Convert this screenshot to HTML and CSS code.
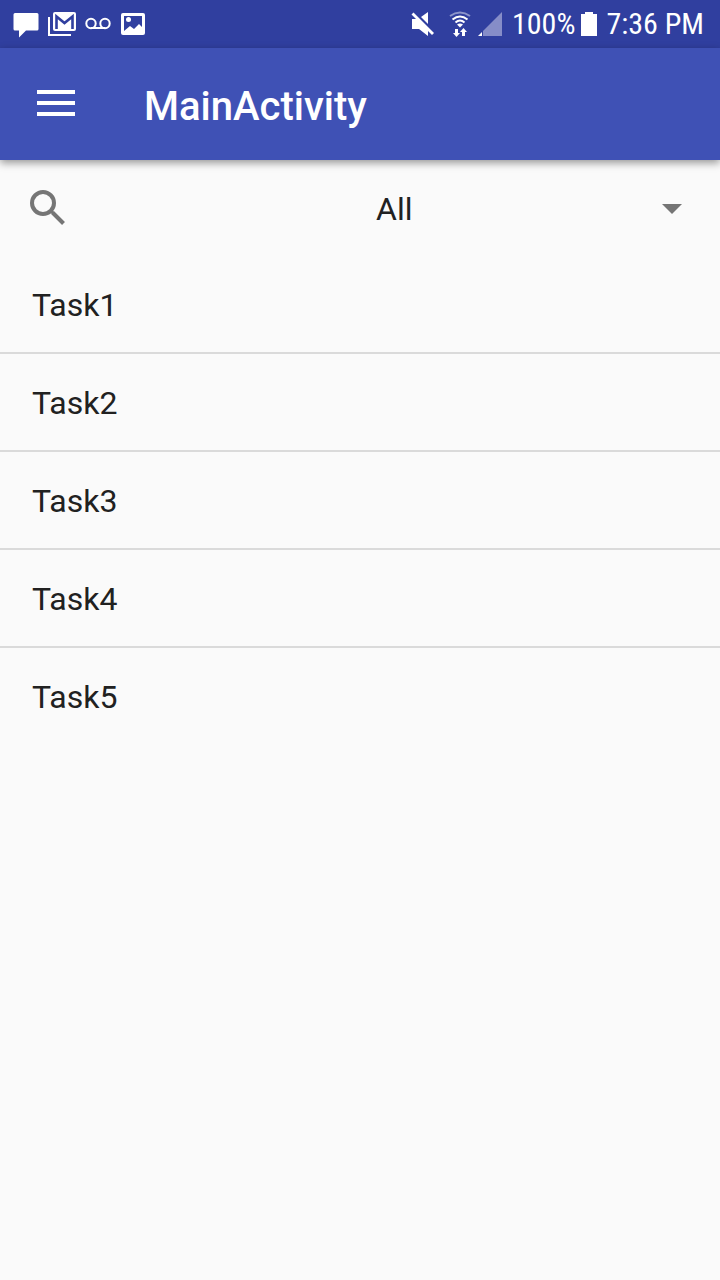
FILE: index.html
```html
<!DOCTYPE html>
<html lang="en">
<head>
<meta charset="utf-8">
<meta name="viewport" content="width=device-width, initial-scale=1">
<title>MainActivity</title>
<link rel="stylesheet" href="styles.css">
</head>
<body>
<div class="status-bar">
  <div class="notifications">
    <svg width="26" height="28" viewBox="0 0 26 28" fill="#fff" aria-hidden="true"><path d="M2 3h22q1.500 0 1.500 1.500v14.500q0 1.500-1.500 1.500H13L6 27.500v-7H2Q.5 20.500.5 19V4.500Q.5 3 2 3z"/></svg>
    <svg width="28" height="28" viewBox="0 0 28 28" fill="none" aria-hidden="true"><path d="M1 7v18h22" stroke="#fff" stroke-width="2"/><rect x="5" y="2" width="23" height="19" rx="2" fill="#fff"/><path d="M8.500 19V6.500l8 6.500 8-6.500V19" stroke="#303f9f" stroke-width="2.600"/></svg>
    <svg width="26" height="28" viewBox="0 0 26 28" fill="none" stroke="#fff" stroke-width="2" aria-hidden="true"><circle cx="6" cy="13.500" r="4.700"/><circle cx="20" cy="13.500" r="4.700"/><path d="M6 18h14"/></svg>
    <svg width="26" height="28" viewBox="0 0 26 28" aria-hidden="true"><rect x="1" y="3" width="24" height="22" rx="2" fill="#fff"/><path d="M4 6h18v11l-3-3-5 5-4-3-6 5z" fill="#303f9f"/><circle cx="8.500" cy="9.500" r="2.500" fill="#fff"/></svg>
  </div>
  <div class="system">
    <svg width="24" height="26" viewBox="0 0 24 26" aria-hidden="true"><path d="M1 8h5l1-1 10 10v8l-9-7H1z" fill="#fff"/><path d="M10 6l7-5v12z" fill="#fff"/><path d="M1.500 2.500l20.500 20.500" stroke="#fff" stroke-width="2.800"/></svg>
    <svg class="wifi" width="22" height="26" viewBox="0 0 22 26" fill="none" stroke="#fff" stroke-width="2" aria-hidden="true"><path d="M1 5q10-7 20 0" opacity=".45"/><path d="M3.500 8.500q7.500-6 15 0M6.500 11.500q4.500-4 9 0"/><path d="M8 13.500q3-2 6 0L11 16.500z" fill="#fff" stroke="none"/><path d="M6 18h3v4h2l-3.500 4L4 22h2zM13 25v-4h-2l3.500-4 3.500 4h-2v4z" fill="#fff" stroke="none"/></svg>
    <svg width="24" height="24" viewBox="0 0 24 24" aria-hidden="true"><path d="M24 0v24H5v-5z" fill="#868dc8"/><path d="M0 24l4-4v4z" fill="#fff"/></svg>
    <span class="battery-level">100%</span>
    <svg class="battery" width="16" height="26" viewBox="0 0 16 26" fill="#fff" aria-hidden="true"><path d="M4 1h8v2h4v22H0V3h4z"/></svg>
    <time class="clock">7:36 PM</time>
  </div>
</div>
<header class="app-bar">
  <button class="menu-button" type="button" aria-label="Open menu"><svg width="38" height="26" viewBox="0 0 38 26" fill="#fff" aria-hidden="true"><path d="M0 0h38v4H0zM0 11h38v4H0zM0 22h38v4H0z"/></svg></button>
  <h1 class="title">MainActivity</h1>
</header>
<main>
  <div class="filter-row">
    <div class="search-cell">
      <button class="search-button" type="button" aria-label="Search"><svg width="36" height="36" viewBox="0 0 36 36" fill="none" stroke="#757575" stroke-width="4" aria-hidden="true"><circle cx="13" cy="13" r="11"/><path d="M20.500 20.500l3 3" stroke-width="3"/><path d="M22.500 22.500l11 11"/></svg></button>
    </div>
    <div class="spinner">
      <select class="spinner-select" aria-label="Filter tasks"><option>All</option></select>
      <svg class="spinner-arrow" width="20" height="10" viewBox="0 0 20 10" fill="#757575" aria-hidden="true"><path d="M0 0h20L10 10z"/></svg>
    </div>
  </div>
  <ul class="task-list">
    <li class="task">Task1</li>
    <li class="task">Task2</li>
    <li class="task">Task3</li>
    <li class="task">Task4</li>
    <li class="task">Task5</li>
  </ul>
</main>
</body>
</html>
```
FILE: styles.css
```css
* {
  box-sizing: border-box;
}

body {
  margin: 0;
  min-height: 100vh;
  background: #fafafa;
  color: #212121;
  font-family: Roboto, "Liberation Sans", sans-serif;
  font-size: 32px;
}

svg {
  display: block;
  flex: none;
}

button {
  padding: 0;
  border: 0;
  background: none;
}

.status-bar {
  display: flex;
  justify-content: space-between;
  align-items: center;
  height: 48px;
  padding: 0 16px 0 13px;
  background: #303f9f;
  color: #fff;
  font-family: "Roboto Condensed", Roboto, sans-serif;
  font-size: 30px;
  line-height: 50px;
  white-space: nowrap;
}

.notifications {
  display: flex;
  align-items: center;
  gap: 9px;
}

.system {
  display: flex;
  align-items: center;
}

.wifi {
  margin: 0 7px 0 14px;
}

.battery-level {
  margin-left: 10px;
}

.battery {
  margin: 0 9px 0 6px;
}

.app-bar {
  position: relative;
  display: flex;
  align-items: center;
  height: 112px;
  background: #3f51b5;
  color: #fff;
  box-shadow: 0 3px 8px rgba(0, 0, 0, 0.4);
}

.menu-button {
  display: flex;
  justify-content: center;
  width: 112px;
  padding-bottom: 2px;
}

.title {
  margin: 0 0 0 32px;
  padding-top: 6px;
  font-size: 40px;
  font-weight: 500;
  line-height: 48px;
}

.filter-row {
  display: grid;
  grid-template-columns: 1fr 1fr;
  align-items: center;
  height: 96px;
}

.search-cell {
  display: flex;
  padding-left: 30px;
}

.spinner {
  position: relative;
}

.spinner-select {
  display: block;
  width: 100%;
  height: 96px;
  padding: 2px 64px 0 16px;
  border: 0;
  appearance: none;
  background: none;
  color: inherit;
  font: inherit;
}

.spinner-arrow {
  position: absolute;
  top: 44px;
  right: 38px;
  pointer-events: none;
}

.task-list {
  margin: 0;
  padding: 0;
  list-style: none;
}

.task {
  padding: 25px 32px 23px;
  line-height: 48px;
}

.task + .task {
  border-top: 2px solid #dadada;
}
```
